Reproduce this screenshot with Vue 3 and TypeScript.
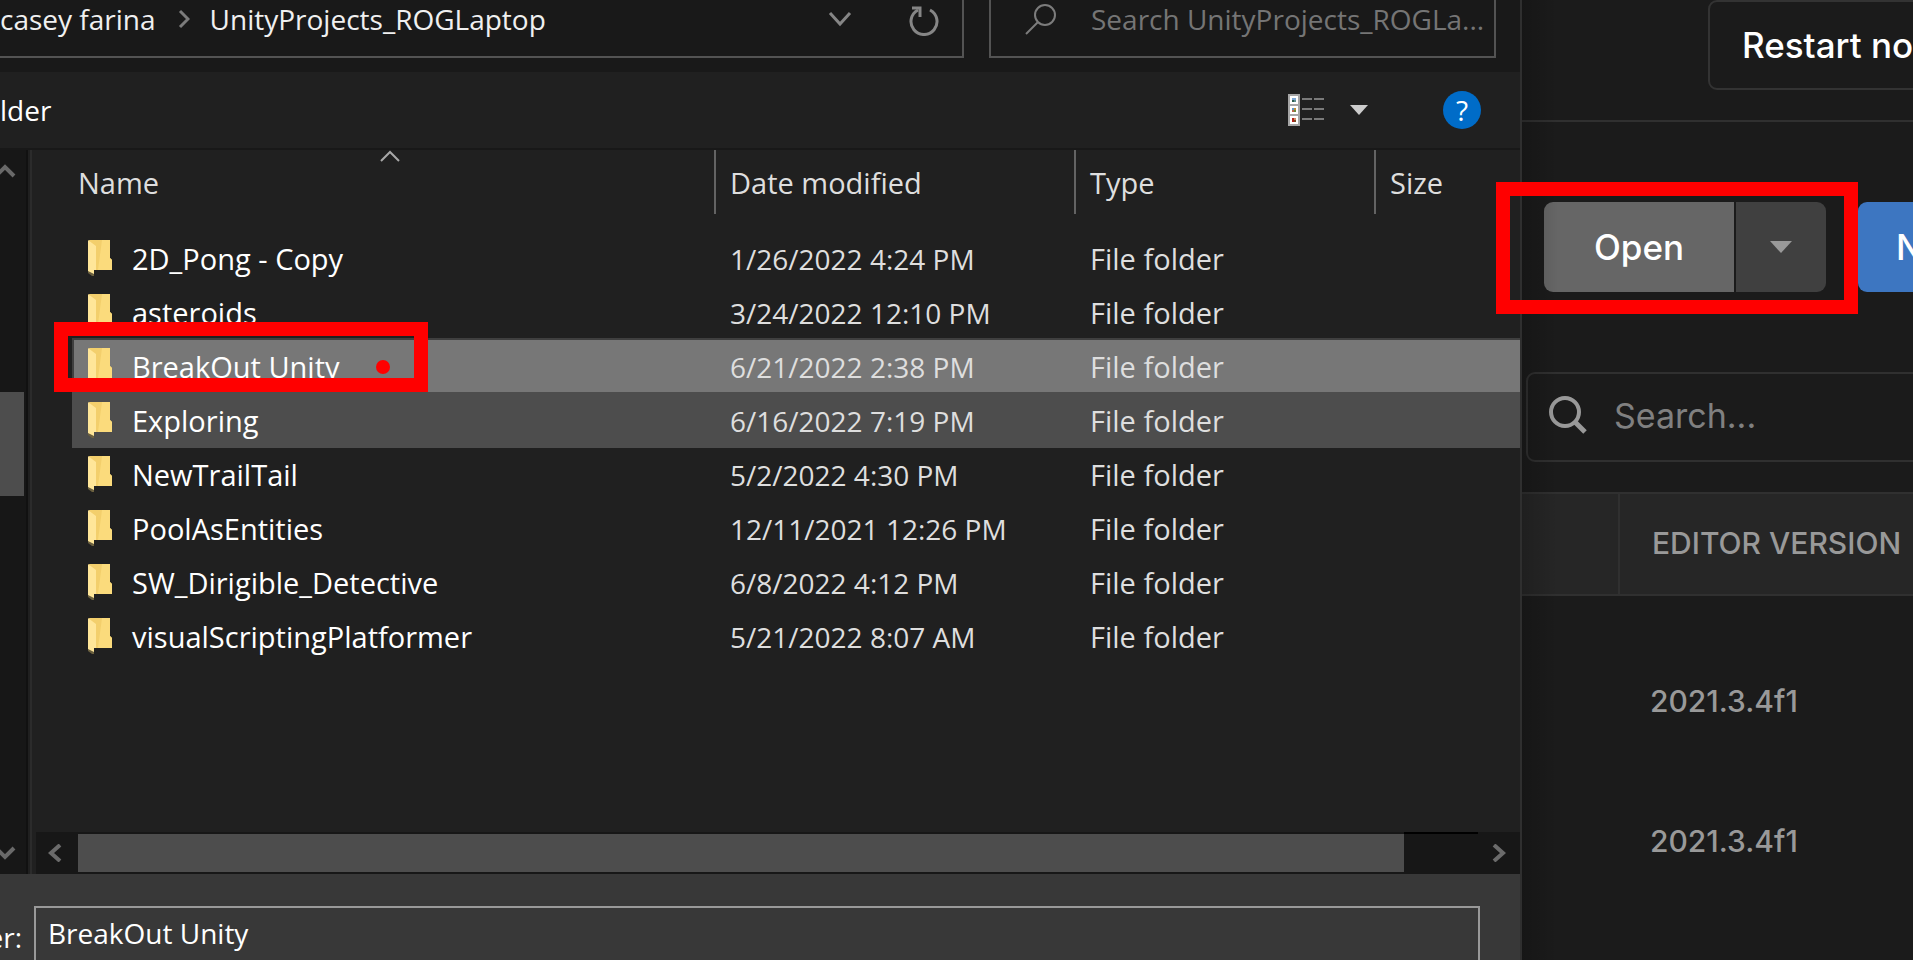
<script setup lang="ts">
interface Folder {
  name: string
  modified: string
  kind: string
  state?: 'selected' | 'hovered'
}

const folders: Folder[] = [
  { name: '2D_Pong - Copy', modified: '1/26/2022 4:24 PM', kind: 'File folder' },
  { name: 'asteroids', modified: '3/24/2022 12:10 PM', kind: 'File folder' },
  { name: 'BreakOut Unity', modified: '6/21/2022 2:38 PM', kind: 'File folder', state: 'selected' },
  { name: 'Exploring', modified: '6/16/2022 7:19 PM', kind: 'File folder', state: 'hovered' },
  { name: 'NewTrailTail', modified: '5/2/2022 4:30 PM', kind: 'File folder' },
  { name: 'PoolAsEntities', modified: '12/11/2021 12:26 PM', kind: 'File folder' },
  { name: 'SW_Dirigible_Detective', modified: '6/8/2022 4:12 PM', kind: 'File folder' },
  { name: 'visualScriptingPlatformer', modified: '5/21/2022 8:07 AM', kind: 'File folder' },
]

const versions: string[] = ['2021.3.4f1', '2021.3.4f1']
</script>

<template>
  <main class="screen">
    <section class="dialog" aria-label="Select folder">
      <div class="address-row">
        <nav class="address" aria-label="Path">
          <a class="crumb" href="#">casey farina</a>
          <svg class="crumb-sep" width="12" height="20" viewBox="0 0 12 20">
            <path d="M2 2l8 8-8 8" fill="none" stroke="#7c7c7c" stroke-width="3" />
          </svg>
          <a class="crumb" href="#">UnityProjects_ROGLaptop</a>
          <button class="plain history" type="button" aria-label="Previous locations">
            <svg width="24" height="16" viewBox="0 0 24 16">
              <path d="M2 2l10 11L22 2" fill="none" stroke="#868686" stroke-width="3" />
            </svg>
          </button>
          <button class="plain refresh" type="button" aria-label="Refresh">
            <svg width="32" height="32" viewBox="0 0 32 32">
              <path d="M22 6a13 13 0 1 1-12 0" fill="none" stroke="#868686" stroke-width="3" />
              <path d="M4 4h8v9" fill="none" stroke="#868686" stroke-width="3" />
            </svg>
          </button>
        </nav>
        <label class="find">
          <svg width="32" height="32" viewBox="0 0 32 32">
            <circle cx="20" cy="12" r="10" fill="none" stroke="#7c7c7c" stroke-width="2" />
            <path d="M13 19L1 31" stroke="#7c7c7c" stroke-width="2" />
          </svg>
          <input type="text" placeholder="Search UnityProjects_ROGLa..." aria-label="Search UnityProjects_ROGLaptop" />
        </label>
      </div>

      <div class="toolbar">
        <button class="plain new-folder" type="button">lder</button>
        <button class="plain views" type="button" aria-label="Change your view">
          <svg width="36" height="32" viewBox="0 0 36 32">
            <path d="M0 0h12v32H0z" fill="#a6a6a6" />
            <path d="M2 2h8v8H2zM2 12h8v8H2zM2 22h8v8H2z" fill="#fff" />
            <path d="M4 4h4v4H4z" fill="#7fa9d6" />
            <path d="M4 6h2v2H4z" fill="#2f5f50" />
            <path d="M6 6h2v2H6z" fill="#5f8f90" />
            <path d="M4 14h4v4H4z" fill="#5b93c6" />
            <path d="M6 14h2v2H6z" fill="#c08f35" />
            <path d="M4 16h2v2H4z" fill="#b8674a" />
            <path d="M6 16h2v2H6z" fill="#6b8a3a" />
            <path d="M4 24h4v4H4z" fill="#b1221a" />
            <path d="M6 24h2v2H6z" fill="#cf8a62" />
            <path d="M6 26h2v2H6z" fill="#7d4a20" />
            <path d="M14 5h10M26 5h10M14 15h10M26 15h10M14 25h10M26 25h10" stroke="#7a7a7a" stroke-width="2" />
          </svg>
        </button>
        <button class="plain more" type="button" aria-label="More options">
          <svg width="18" height="10" viewBox="0 0 18 10"><path d="M0 0h18L9 10z" fill="#ccc" /></svg>
        </button>
        <button class="plain help" type="button" aria-label="Help">?</button>
      </div>

      <div class="body">
        <aside class="tree">
          <svg width="20" height="14" viewBox="0 0 20 14">
            <path d="M-4 12l9-9 9 9" fill="none" stroke="#696969" stroke-width="4" />
          </svg>
          <div class="tree-thumb"></div>
          <svg width="20" height="14" viewBox="0 0 20 14">
            <path d="M-4 2l9 9 9-9" fill="none" stroke="#696969" stroke-width="4" />
          </svg>
        </aside>
        <div class="splitter"></div>
        <div class="content">
          <table class="files">
            <colgroup>
              <col class="c-name" />
              <col class="c-date" />
              <col class="c-type" />
              <col class="c-size" />
            </colgroup>
            <thead>
              <tr>
                <th scope="col">
                  Name
                  <svg class="sort" width="20" height="12" viewBox="0 0 20 12">
                    <path d="M1 11l9-9 9 9" fill="none" stroke="#a8a8a8" stroke-width="2" />
                  </svg>
                </th>
                <th scope="col">Date modified</th>
                <th scope="col">Type</th>
                <th scope="col">Size</th>
              </tr>
            </thead>
            <tbody>
              <tr v-for="f in folders" :key="f.name" :class="f.state">
                <td>
                  <div class="entry">
                    <svg width="24" height="36" viewBox="0 0 24 36">
                      <path d="M1 0h21v18l2 2v10H6z" fill="#f3cf6c" />
                      <path d="M14 0h8v18l2 2v10H10z" fill="#fbdb7c" />
                      <path d="M0 0l8 6v24H6v5L0 32z" fill="#ffe699" />
                      <path d="M0 31l6 3v2H4L0 33z" fill="#6b603f" />
                    </svg>
                    <span>{{ f.name }}</span>
                  </div>
                </td>
                <td class="date">{{ f.modified }}</td>
                <td>{{ f.kind }}</td>
                <td></td>
              </tr>
            </tbody>
          </table>
          <div class="hscroll">
            <button class="plain step" type="button" aria-label="Scroll left">
              <svg width="14" height="18" viewBox="0 0 14 18">
                <path d="M12 1L3 9l9 8" fill="none" stroke="#6b6b6b" stroke-width="4" />
              </svg>
            </button>
            <div class="track"><div class="thumb"></div><div class="rest"></div></div>
            <button class="plain step" type="button" aria-label="Scroll right">
              <svg width="14" height="18" viewBox="0 0 14 18">
                <path d="M2 1l9 8-9 8" fill="none" stroke="#6b6b6b" stroke-width="4" />
              </svg>
            </button>
          </div>
        </div>
      </div>

      <div class="footer">
        <label for="folder">er:</label>
        <input id="folder" type="text" value="BreakOut Unity" />
      </div>
    </section>

    <section class="hub" aria-label="Projects">
      <div class="notice"><button class="restart" type="button">Restart now</button></div>
      <div class="actions">
        <div class="split">
          <button class="open" type="button">Open</button>
          <button class="caret" type="button" aria-label="Open options">
            <svg width="22" height="12" viewBox="0 0 22 12"><path d="M0 0h22L11 12z" fill="#999" /></svg>
          </button>
        </div>
        <button class="new" type="button">New project</button>
      </div>
      <label class="filter">
        <svg width="40" height="40" viewBox="0 0 40 40">
          <circle cx="17" cy="17" r="14" fill="none" stroke="#999" stroke-width="4" />
          <path d="M27 27l10 10" stroke="#999" stroke-width="5" />
        </svg>
        <input type="text" placeholder="Search..." aria-label="Search projects" />
      </label>
      <table class="projects">
        <thead>
          <tr><th class="lead"></th><th scope="col">EDITOR VERSION</th></tr>
        </thead>
        <tbody>
          <tr v-for="(v, i) in versions" :key="i"><td></td><td>{{ v }}</td></tr>
        </tbody>
      </table>
      <div class="shade"></div>
    </section>

    <div class="mark mark-folder"></div>
    <div class="pointer"></div>
    <div class="mark mark-open"></div>
  </main>
</template>

<style>
html,
body {
  background: #1b1b1b;
  overflow: hidden;
}
</style>

<style scoped>
.screen {
  position: relative;
  display: grid;
  grid-template-columns: 1522fr 391fr;
  height: 100vh;
  overflow: hidden;
  background: #1b1b1b;
  color: #fff;
  font-family: "Open Sans", "Noto Sans", sans-serif;
  font-size: 28px;
}
.screen * {
  box-sizing: border-box;
}
button,
input {
  margin: 0;
  font: inherit;
  color: inherit;
  outline: none;
}
svg {
  display: block;
  flex: none;
}
.plain {
  padding: 0;
  border: 0;
  background: none;
}
.dialog {
  display: flex;
  flex-direction: column;
  min-width: 0;
  height: 100vh;
  background: #202020;
  border-right: 2px solid #2f2f2f;
}
.address-row {
  display: flex;
  gap: 25px;
  height: 72px;
  padding: 0 24px 14px 0;
  background: #191919;
}
.address {
  flex: 1;
  display: flex;
  align-items: center;
  padding-bottom: 18px;
  border: solid #535353;
  border-width: 0 2px 2px 0;
  white-space: nowrap;
}
.crumb {
  color: #f0f0f0;
  text-decoration: none;
}
.crumb-sep {
  margin: 0 20px 0 22px;
}
.history {
  margin-left: auto;
  padding-right: 28px;
}
.refresh {
  padding: 2px 22px 0 28px;
}
.find {
  display: flex;
  align-items: center;
  gap: 34px;
  width: 507px;
  padding: 0 10px 18px 34px;
  border: solid #535353;
  border-width: 0 2px 2px;
}
.find input {
  flex: 1;
  min-width: 0;
  padding: 0;
  border: 0;
  background: none;
}
.find input::placeholder {
  color: #757575;
  opacity: 1;
}
.toolbar {
  display: flex;
  align-items: center;
  height: 78px;
  padding-right: 39px;
  border-bottom: 2px solid #181818;
}
.new-folder {
  margin-right: auto;
}
.more {
  margin: 0 75px 0 26px;
}
.help {
  width: 38px;
  height: 38px;
  border-radius: 50%;
  background: #006cc8;
  line-height: 38px;
}
.body {
  flex: 1;
  display: flex;
  min-height: 0;
}
.tree {
  display: flex;
  flex-direction: column;
  width: 28px;
  padding: 14px 0;
  background: #171717;
  border-right: 2px solid #111;
}
.tree-thumb {
  width: 24px;
  height: 104px;
  margin: 214px 0 auto;
  background: #4d4d4d;
}
.splitter {
  width: 8px;
  border-left: 2px solid #202020;
  box-shadow: inset 2px 0 #2b2b2b;
}
.content {
  flex: 1;
  display: flex;
  flex-direction: column;
  justify-content: space-between;
  min-width: 0;
}
.files {
  width: 100%;
  padding-left: 36px;
  table-layout: fixed;
  border-collapse: separate;
  border-spacing: 0;
  font-size: 29px;
  white-space: nowrap;
}
.c-date {
  width: 360px;
}
.c-type {
  width: 300px;
}
.c-size {
  width: 146px;
}
.files th {
  position: relative;
  height: 64px;
  padding: 0 0 0 14px;
  border-left: 2px solid #636363;
  color: #dedede;
  font-weight: 400;
  text-align: left;
}
.files th:first-child {
  padding-left: 6px;
  border: 0;
}
.sort {
  position: absolute;
  top: 0;
  left: 48%;
}
.files thead::after {
  content: "";
  display: block;
  height: 16px;
}
.files td {
  height: 54px;
  padding: 3px 0 0 16px;
  color: #dedede;
}
.files .date {
  font-size: 28px;
}
.files td:first-child {
  padding: 2px 0 0 16px;
  color: #fff;
}
.entry {
  display: flex;
  align-items: center;
  gap: 20px;
}
.selected td {
  background: #777;
  box-shadow: inset 0 2px #3f3f3f;
}
.selected td:first-child {
  box-shadow: inset 2px 2px #3f3f3f;
}
.hovered td {
  background: #4d4d4d;
  box-shadow: 0 2px #4d4d4d;
}
.hscroll {
  display: flex;
  height: 42px;
  background: #171717;
}
.step {
  display: flex;
  align-items: center;
  justify-content: center;
  width: 42px;
}
.step:first-child {
  padding-right: 4px;
}
.track {
  flex: 1;
  display: flex;
}
.thumb {
  flex: 1;
  margin: 2px 0;
  background: #4d4d4d;
}
.rest {
  width: 74px;
  border-top: 2px solid #000;
}
.footer {
  display: flex;
  gap: 12px;
  height: 86px;
  padding: 32px 40px 0 0;
  background: #383838;
}
.footer label {
  display: flex;
  justify-content: flex-end;
  width: 22px;
  padding-top: 11px;
  line-height: 40px;
  white-space: nowrap;
}
.footer input {
  flex: 1;
  min-width: 0;
  height: 66px;
  padding: 0 12px 12px;
  border: 2px solid #999;
  background: none;
}
.hub {
  position: relative;
  min-width: 0;
  overflow: hidden;
  font-family: Inter, Roboto, sans-serif;
  font-size: 35px;
  font-weight: 500;
}
.notice {
  height: 122px;
  padding-left: 186px;
  border-bottom: 2px solid #303030;
}
.restart {
  height: 90px;
  padding: 0 32px;
  border: 2px solid #333;
  border-radius: 9px;
  background: none;
  white-space: nowrap;
}
.actions {
  display: flex;
  gap: 32px;
  padding: 80px 0 0 22px;
}
.actions button {
  height: 90px;
  border: 0;
  white-space: nowrap;
}
.split {
  display: flex;
  gap: 2px;
}
.open {
  width: 190px;
  border-radius: 9px 0 0 9px;
  background: #666;
}
.caret {
  display: flex;
  align-items: center;
  justify-content: center;
  width: 90px;
  border-radius: 0 9px 9px 0;
  background: #404040;
}
.new {
  padding: 0 38px;
  border-radius: 9px;
  background: #3d76c1;
}
.filter {
  display: flex;
  align-items: center;
  gap: 26px;
  width: 600px;
  height: 90px;
  margin: 80px 0 30px 4px;
  padding: 0 20px 4px;
  border: 2px solid #303030;
  border-radius: 9px;
  font-size: 34px;
  font-weight: 400;
}
.filter input {
  flex: 1;
  min-width: 0;
  padding: 0;
  border: 0;
  background: none;
}
.filter input::placeholder {
  color: #808080;
  opacity: 1;
}
.projects {
  border-collapse: separate;
  border-spacing: 0;
  color: #999;
  font-size: 30px;
  white-space: nowrap;
}
.projects th {
  height: 104px;
  padding: 0 32px 2px 32px;
  border: solid #303030;
  border-width: 2px 0 2px 2px;
  background: #262626;
  font-weight: 500;
  text-align: left;
}
.projects .lead {
  min-width: 96px;
  padding: 0;
  border-left: 0;
}
.projects td {
  height: 140px;
  padding: 87px 0 0 32px;
  vertical-align: top;
  font-weight: 500;
}
.shade {
  position: absolute;
  inset: 0 auto 0 0;
  width: 36px;
  background: linear-gradient(90deg, rgba(0, 0, 0, 0.18), transparent);
}
.mark {
  position: absolute;
  border: 14px solid #f00;
}
.mark-folder {
  top: 322px;
  left: 54px;
  width: 374px;
  height: 70px;
}
.pointer {
  position: absolute;
  top: 360px;
  left: 376px;
  width: 14px;
  height: 14px;
  border-radius: 50%;
  background: #f00;
}
.mark-open {
  top: 182px;
  left: 1496px;
  width: 362px;
  height: 132px;
}
</style>
